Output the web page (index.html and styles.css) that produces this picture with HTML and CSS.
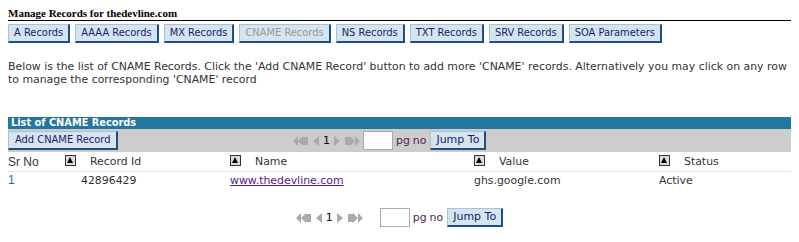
FILE: index.html
```html
<!DOCTYPE html>
<html lang="en">
<head>
    <meta charset="UTF-8">
    <title>Manage Records</title>
    <link rel="stylesheet" href="styles.css">
</head>
<body>
    <div class="page-title">Manage Records for thedevline.com</div>
    <div class="tabs">
        <button class="tab">A Records</button>
        <button class="tab">AAAA Records</button>
        <button class="tab">MX Records</button>
        <button class="tab current">CNAME Records</button>
        <button class="tab">NS Records</button>
        <button class="tab">TXT Records</button>
        <button class="tab">SRV Records</button>
        <button class="tab">SOA Parameters</button>
    </div>

    <p class="intro">Below is the list of CNAME Records. Click the 'Add CNAME Record' button to add more 'CNAME' records. Alternatively you may click on any row to manage the corresponding 'CNAME' record</p>

    <div class="list">
        <div class="list-title">List of CNAME Records</div>
        <div class="toolbar">
            <button class="btn">Add CNAME Record</button>
            <div class="pager top-pager">
                <svg class="nav" width="16" height="10" viewBox="0 0 16 10"><path d="M0 5L5 0V10ZM5 5L10 0V10ZM10 1H15V9H10Z" fill="#aaa"/></svg>
                <svg class="nav" width="8" height="10" viewBox="0 0 8 10"><path d="M1 5L7 0V10Z" fill="#aaa"/></svg>
                <span class="pg-num">1</span>
                <svg class="nav" width="8" height="10" viewBox="0 0 8 10"><path d="M7 5L1 0V10Z" fill="#aaa"/></svg>
                <svg class="nav" width="16" height="10" viewBox="0 0 16 10"><path d="M16 5L11 0V10ZM11 5L6 0V10ZM1 1H6V9H1Z" fill="#aaa"/></svg>
                <input class="pg-input" type="text">
                <span class="pg-label">pg</span><span class="pg-label">no</span>
                <button class="btn jump">Jump To</button>
            </div>
            <div class="spacer"></div>
        </div>
        <div class="grid head">
            <div class="cell">Sr No</div>
            <div class="cell"><span class="sort"></span>Record Id</div>
            <div class="cell"><span class="sort"></span>Name</div>
            <div class="cell"><span class="sort"></span>Value</div>
            <div class="cell"><span class="sort"></span>Status</div>
        </div>
        <div class="grid row">
            <div class="cell sr">1</div>
            <div class="cell rid">42896429</div>
            <div class="cell"><a href="#">www.thedevline.com</a></div>
            <div class="cell">ghs.google.com</div>
            <div class="cell">Active</div>
        </div>
    </div>

    <div class="pager bottom-pager">
        <svg class="nav" width="16" height="10" viewBox="0 0 16 10"><path d="M0 5L5 0V10ZM5 5L10 0V10ZM10 1H15V9H10Z" fill="#aaa"/></svg>
        <svg class="nav" width="8" height="10" viewBox="0 0 8 10"><path d="M1 5L7 0V10Z" fill="#aaa"/></svg>
        <span class="pg-num">1</span>
        <svg class="nav" width="8" height="10" viewBox="0 0 8 10"><path d="M7 5L1 0V10Z" fill="#aaa"/></svg>
        <svg class="nav" width="16" height="10" viewBox="0 0 16 10"><path d="M16 5L11 0V10ZM11 5L6 0V10ZM1 1H6V9H1Z" fill="#aaa"/></svg>
        <input class="pg-input wide-gap" type="text">
        <span class="pg-label">pg</span><span class="pg-label">no</span>
        <button class="btn jump">Jump To</button>
    </div>
</body>
</html>
```

FILE: styles.css
```css
body {
    margin: 0;
    padding: 8px;
    font-family: "DejaVu Sans", Verdana, sans-serif;
    font-size: 10.9px;
    color: #333;
    background: #fff;
}
.page-title {
    font-family: "Liberation Serif", "Times New Roman", serif;
    font-weight: bold;
    font-size: 11px;
    color: #000;
    line-height: 11px;
    padding-bottom: 1px;
    border-bottom: 1px solid #000;
}
.tabs {
    display: flex;
    gap: 5px;
    margin-top: 3px;
}
button {
    font-family: inherit;
    font-stretch: condensed;
    font-size: 11px;
    color: #1a1a6e;
    background: #d5e5ef;
    border: 1px solid #1f4f7f;
    border-top-color: #a9c3d6;
    border-left-color: #a9c3d6;
    border-width: 1px 2px 2px 1px;
    padding: 0 5px;
    height: 19px;
    line-height: 16px;
    margin: 0;
}
.tab.current {
    color: #999;
}
.intro {
    margin: 17px 0 0;
    line-height: 13px;
    color: #333;
}
.list {
    margin-top: 31px;
}
.list-title {
    background: #2176a2;
    color: #fff;
    font-weight: bold;
    font-stretch: condensed;
    height: 12px;
    line-height: 12px;
    padding-left: 3px;
}
.toolbar {
    background: #cccccc;
    display: flex;
    align-items: center;
    height: 23px;
}
.toolbar .btn {
    padding: 0 6px;
}
.toolbar .spacer {
    width: 130px;
}
.pager {
    display: flex;
    align-items: center;
    gap: 3px;
}
.top-pager {
    flex: 1;
    justify-content: center;
}
.bottom-pager {
    justify-content: center;
    margin-top: 20px;
}
.pg-num {
    color: #000;
}
.nav {
    display: block;
}
.pg-input {
    width: 28px;
    height: 17px;
    padding: 0;
    margin-left: 0;
    border: 1px solid #aaa;
    background: #fff;
}
.pg-input.wide-gap {
    margin-left: 14px;
}
.pg-label {
    color: #551a5b;
    margin-left: 0;
}
.pager .jump {
    margin-left: 1px;
    padding: 0 5px;
    font-stretch: normal;
    font-size: 11px;
}
.grid {
    display: grid;
    grid-template-columns: 57px 165px 244px 185px 1fr;
}
.head {
    height: 19px;
    align-items: center;
    border-bottom: 1px solid #e6e6e6;
}
.head .cell:first-child {
    font-family: "Liberation Sans", Arial, sans-serif;
    font-size: 12px;
}
.sort {
    display: inline-block;
    vertical-align: -1px;
    width: 9px;
    height: 9px;
    border: 1px solid #333;
    background: #ddd;
    margin-right: 14px;
    position: relative;
}
.sort::after {
    content: "";
    position: absolute;
    left: 1px;
    top: 1px;
    border-left: 3.5px solid transparent;
    border-right: 3.5px solid transparent;
    border-bottom: 6px solid #000;
}
.row {
    height: 16px;
    align-items: center;
}
.row .sr {
    font-family: "Liberation Sans", Arial, sans-serif;
    font-size: 12px;
    color: #1f5fb0;
}
.row .rid {
    padding-left: 16px;
}
.row a {
    color: #551a8b;
}
```
